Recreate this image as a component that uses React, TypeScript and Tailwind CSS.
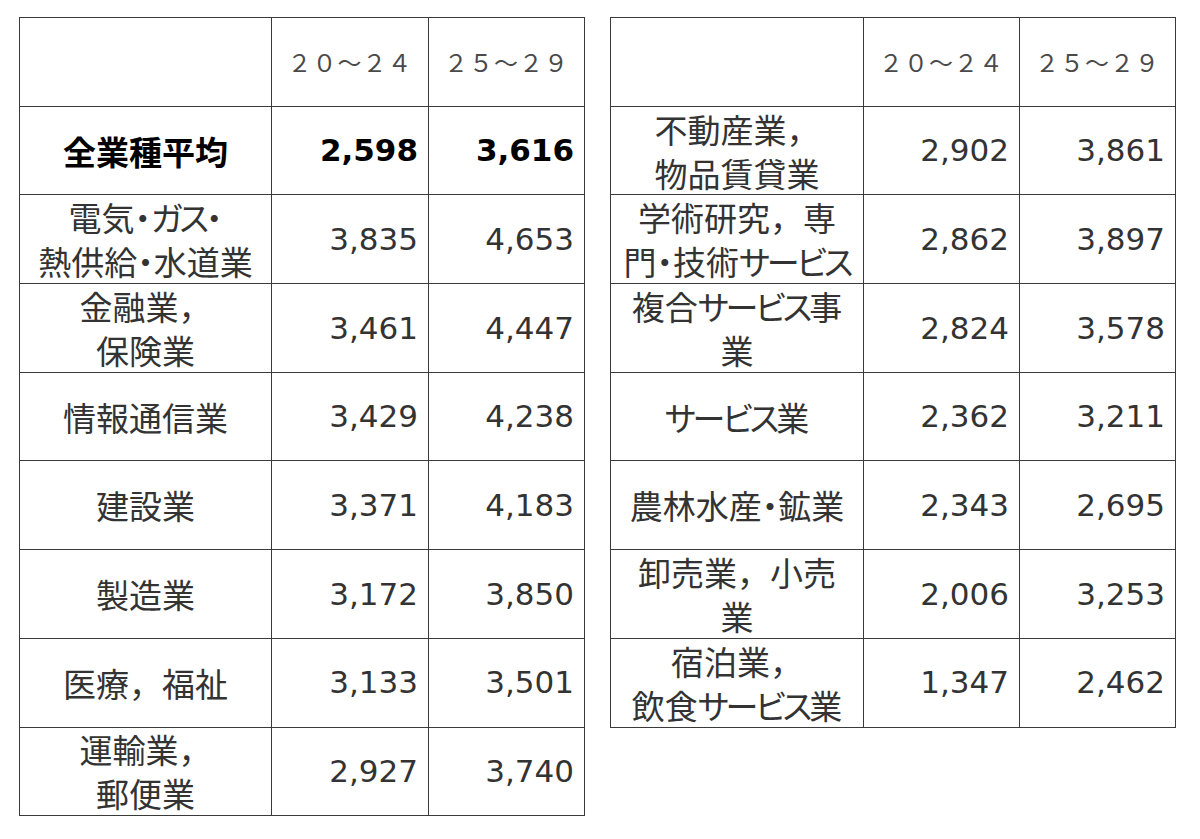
import type { ReactNode } from 'react';

// narrow middle dot / katakana, like the proportional glyphs in the picture
const D = ({ children }: { children: ReactNode }) => (
  <span className="[font-feature-settings:'palt']">{children}</span>
);
const K = ({ children }: { children: ReactNode }) => (
  <span className="[font-feature-settings:'palt'] tracking-[-3px]">{children}</span>
);

interface Row {
  label: ReactNode[];
  a: string;
  b: string;
  bold?: boolean;
}

const leftRows: Row[] = [
  { label: ['全業種平均'], a: '2,598', b: '3,616', bold: true },
  { label: [<>電気<D>・</D><K>ガス</K><D>・</D></>, <>熱供給<D>・</D>水道業</>], a: '3,835', b: '4,653' },
  { label: ['金融業，', '保険業'], a: '3,461', b: '4,447' },
  { label: ['情報通信業'], a: '3,429', b: '4,238' },
  { label: ['建設業'], a: '3,371', b: '4,183' },
  { label: ['製造業'], a: '3,172', b: '3,850' },
  { label: ['医療，福祉'], a: '3,133', b: '3,501' },
  { label: ['運輸業，', '郵便業'], a: '2,927', b: '3,740' },
];

const rightRows: Row[] = [
  { label: ['不動産業，', '物品賃貸業'], a: '2,902', b: '3,861' },
  { label: ['学術研究，専', <>門<D>・</D>技術<K>サービス</K></>], a: '2,862', b: '3,897' },
  { label: [<>複合<K>サービス</K>事</>, '業'], a: '2,824', b: '3,578' },
  { label: [<><K>サービス</K>業</>], a: '2,362', b: '3,211' },
  { label: [<>農林水産<D>・</D>鉱業</>], a: '2,343', b: '2,695' },
  { label: ['卸売業，小売', '業'], a: '2,006', b: '3,253' },
  { label: ['宿泊業，', <>飲食<K>サービス</K>業</>], a: '1,347', b: '2,462' },
];

const cell = 'border-r border-b border-[#3a3a3a] flex items-center overflow-visible';

function Table({ rows, wide }: { rows: Row[]; wide?: boolean }) {
  return (
    <div
      className={`grid auto-rows-[88.7px] border-l border-t border-[#3a3a3a] ${
        wide ? 'grid-cols-[253px_156px_156px]' : 'grid-cols-[252px_157px_156px]'
      }`}
    >
      <div className={cell} />
      <div className={`${cell} justify-center text-[24px] text-[#4a4a4a] font-['Noto_Sans_CJK_JP',sans-serif] tracking-[1px]`}>
        ２０～２４
      </div>
      <div className={`${cell} justify-center text-[24px] text-[#4a4a4a] font-['Noto_Sans_CJK_JP',sans-serif] tracking-[1px]`}>
        ２５～２９
      </div>
      {rows.map((r, i) => (
        <div key={i} className="contents">
          <div
            className={`${cell} flex-col justify-center whitespace-nowrap text-[33px] leading-[44px] font-['Noto_Sans_CJK_JP',sans-serif] ${
              r.bold ? 'font-bold text-black' : 'text-[#333]'
            }`}
          >
            {r.label.map((l, j) => (
              <div key={j}>{l}</div>
            ))}
          </div>
          <div
            className={`${cell} justify-end pr-[10px] text-[31px] font-['DejaVu_Sans',sans-serif] ${
              r.bold ? 'font-bold text-black' : 'text-[#333]'
            }`}
          >
            {r.a}
          </div>
          <div
            className={`${cell} justify-end pr-[10px] text-[31px] font-['DejaVu_Sans',sans-serif] ${
              r.bold ? 'font-bold text-black' : 'text-[#333]'
            }`}
          >
            {r.b}
          </div>
        </div>
      ))}
    </div>
  );
}

export default function App() {
  return (
    <div className="w-[1200px] h-[839px] bg-white pl-[19px] pt-[17px] flex items-start gap-[25px]">
      <Table rows={leftRows} />
      <Table rows={rightRows} wide />
    </div>
  );
}
